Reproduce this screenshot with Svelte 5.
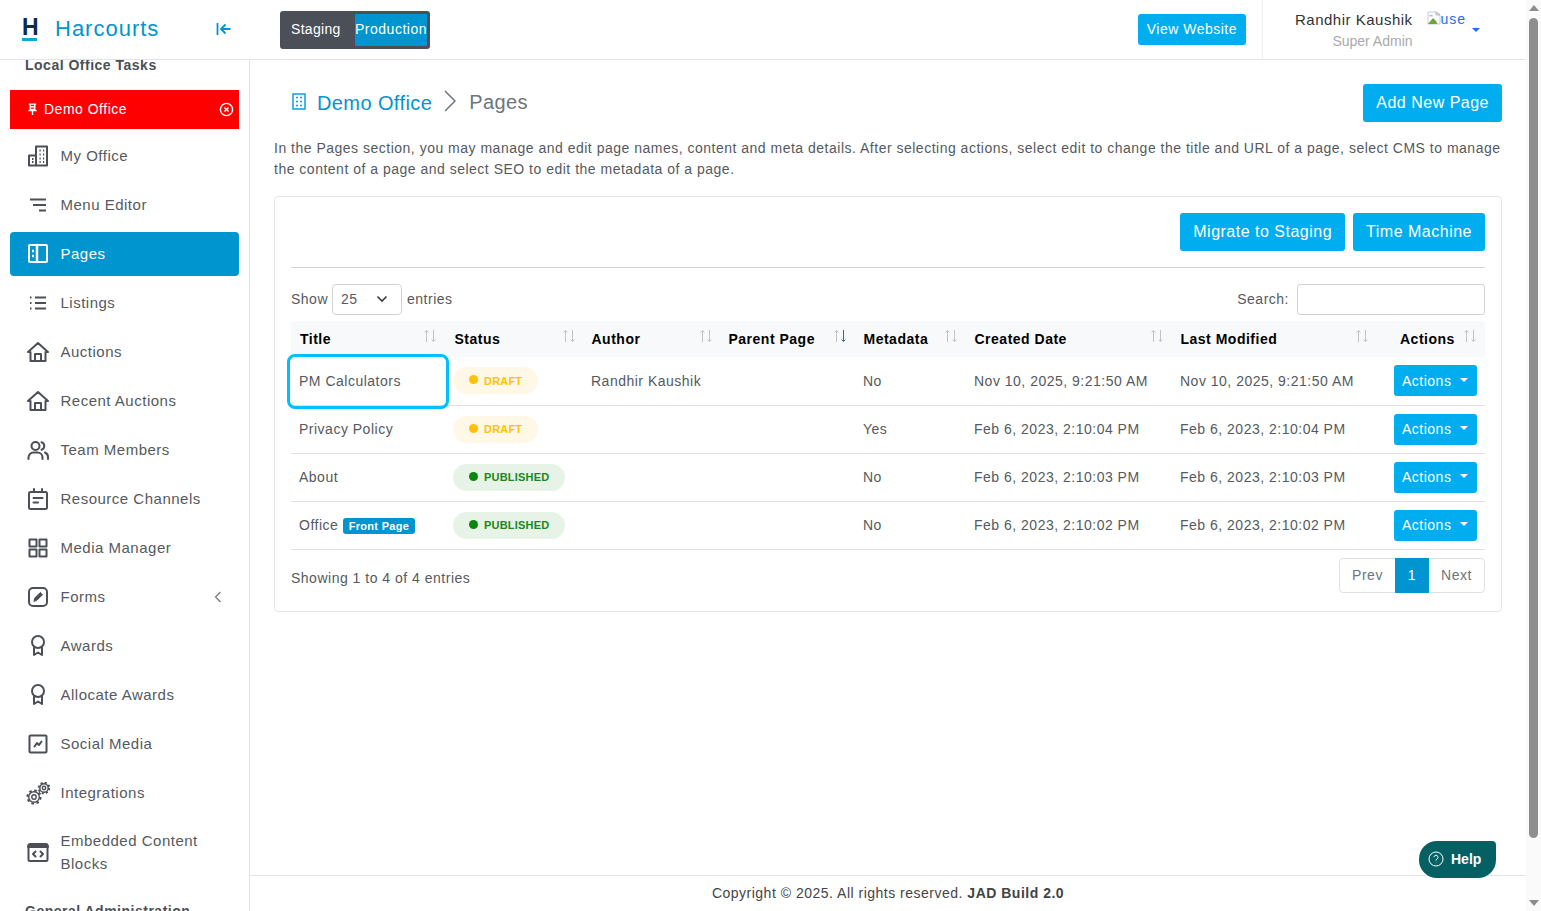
<script>
	// sidebar icons, drawn on a 24 box with a 2px-ish stroke
	const icons = {
		office: '<path d="M3 21.500V11.500h7V2.500h11v19z"/><path d="M10 11.500v10M6 15h1.500M6 18h1.500M13.500 6.500h1.200M17 6.500h1.200M13.500 10.500h1.200M17 10.500h1.200M13.500 14.500h1.200M17 14.500h1.200M13.500 18h1.200M17 18h1.200" stroke-linecap="butt"/>',
		menu: '<path d="M4 6.500h16M7 12h13M13 17.500h7" stroke-linecap="butt"/>',
		pages: '<rect x="3" y="3" width="18" height="17" rx="1"/><path d="M11 3v17" stroke-width="2.500"/><path d="M6 9h2M6 14h2" stroke-linecap="butt" stroke-width="2.400"/>',
		list: '<path d="M9 6.500h11M9 12h11M9 17.500h11M4 6.500h1.500M4 12h1.500M4 17.500h1.500" stroke-linecap="butt"/>',
		home: '<path d="M2 12 12 3l10 9h-2.500v9h-15v-9z"/><path d="M9 21v-7h6v7"/>',
		team: '<circle cx="9.500" cy="8" r="4"/><path d="M2.500 21v-1.500a5 5 0 0 1 5-5h4a5 5 0 0 1 5 5V21M15.500 4.200a4 4 0 0 1 0 7.600M19 14.500a5 5 0 0 1 3 4.500v2"/>',
		calendar: '<rect x="3" y="5" width="18" height="17" rx="1.500"/><path d="M8 2v3M16 2v3M7.500 11h9M7.500 15.500h4.500"/>',
		grid: '<rect x="3.500" y="3.500" width="7" height="7"/><rect x="13.500" y="3.500" width="7" height="7"/><rect x="3.500" y="13.500" width="7" height="7"/><rect x="13.500" y="13.500" width="7" height="7"/>',
		form: '<rect x="3" y="3" width="18" height="18" rx="4"/><path d="m8 16 .8-3 5.500-5.500 2.200 2.200-5.500 5.500z" fill="currentColor" stroke-width="1"/>',
		award: '<circle cx="12" cy="8" r="6"/><path d="M8 13.500V21l4-2.500 4 2.500v-7.500"/>',
		chart: '<rect x="3.500" y="3.500" width="17" height="17" rx="1"/><path d="m8.500 14.500 2.500-3.500 2 2 2.500-3.500"/>',
		code: '<rect x="2.500" y="4" width="19" height="17" rx="1.500"/><path d="M2.500 6.500h19" stroke-width="3"/><path d="m9.500 11.500-2.500 2.500 2.500 2.500M14.500 11.500 17 14l-2.500 2.500"/>'
	};

	const nav = [
		{ label: 'My Office', icon: 'office' },
		{ label: 'Menu Editor', icon: 'menu' },
		{ label: 'Pages', icon: 'pages', active: true },
		{ label: 'Listings', icon: 'list' },
		{ label: 'Auctions', icon: 'home' },
		{ label: 'Recent Auctions', icon: 'home' },
		{ label: 'Team Members', icon: 'team' },
		{ label: 'Resource Channels', icon: 'calendar' },
		{ label: 'Media Manager', icon: 'grid' },
		{ label: 'Forms', icon: 'form', more: true },
		{ label: 'Awards', icon: 'award' },
		{ label: 'Allocate Awards', icon: 'award' },
		{ label: 'Social Media', icon: 'chart' },
		{ label: 'Integrations', icon: 'gears' },
		{ label: 'Embedded Content Blocks', icon: 'code' }
	];

	const columns = ['Title', 'Status', 'Author', 'Parent Page', 'Metadata', 'Created Date', 'Last Modified', 'Actions'];

	const rows = [
		{ title: 'PM Calculators', status: 'DRAFT', author: 'Randhir Kaushik', meta: 'No', created: 'Nov 10, 2025, 9:21:50 AM', focus: true },
		{ title: 'Privacy Policy', status: 'DRAFT', author: '', meta: 'Yes', created: 'Feb 6, 2023, 2:10:04 PM' },
		{ title: 'About', status: 'PUBLISHED', author: '', meta: 'No', created: 'Feb 6, 2023, 2:10:03 PM' },
		{ title: 'Office', status: 'PUBLISHED', author: '', meta: 'No', created: 'Feb 6, 2023, 2:10:02 PM', front: true }
	];
</script>

<div class="page">
	<div class="window">
		<header class="topbar">
			<div class="brand">
				<span class="logo">H</span>
				<span class="brand-name">Harcourts</span>
				<svg class="collapse" viewBox="0 0 16 16"><path d="M1.500 2v12M14.500 8H5M9.500 3.500 5 8l4.500 4.500" /></svg>
			</div>
			<div class="env">
				<span class="env-item">Staging</span>
				<span class="env-item env-on">Production</span>
			</div>
			<a class="btn view-site" href="#top">View Website</a>
			<div class="user">
				<div class="user-text">
					<span class="user-name">Randhir Kaushik</span>
					<span class="user-role">Super Admin</span>
				</div>
				<span class="avatar">
					<svg class="broken" viewBox="0 0 14 14">
						<path d="M1 1h8l4 3v9H1z" fill="#fff" stroke="#b9c0c8" stroke-width=".8" />
						<path d="M9 1v3h4z" fill="#d8dde2" stroke="#9aa3ad" stroke-width=".6" />
						<path d="M1 13 6 7l3 3 1.500 3z" fill="#6da53f" />
						<path d="M2 5.500a2 2 0 0 1 4 0z" fill="#a9c7ec" />
					</svg>use
				</span>
				<span class="caret"></span>
			</div>
		</header>

		<div class="body">
			<aside class="sidebar">
				<div class="side-title">Local Office Tasks</div>
				<div class="pinned">
					<svg class="pin" viewBox="0 0 12 14"><path d="M2 1.200h8M3.500 1.200h5V7h-5zM1.500 8.200h9M6 8.200V13M3.500 4h5" /></svg>
					<span>Demo Office</span>
					<svg class="unpin" viewBox="0 0 16 16"><circle cx="8" cy="8" r="6.500" /><path d="m5.800 5.800 4.400 4.400M10.200 5.800l-4.400 4.400" /></svg>
				</div>
				<nav>
					{#each nav as item}
						<a class="nav-item" class:active={item.active} href="#top">
							{#if item.icon === 'gears'}
								<svg class="nav-icon gears" viewBox="0 0 24 24">
									<circle cx="8" cy="16" r="2.200" />
									<circle cx="8" cy="16" r="5.300" />
									<circle class="teeth" cx="8" cy="16" r="6.600" stroke-dasharray="2.590 2.590" />
									<circle cx="18" cy="7" r="1.700" />
									<circle cx="18" cy="7" r="4.200" />
									<circle class="teeth" cx="18" cy="7" r="5.300" stroke-dasharray="2.080 2.080" />
								</svg>
							{:else}
								<svg class="nav-icon" viewBox="0 0 24 24">{@html icons[item.icon]}</svg>
							{/if}
							<span class="nav-label">{item.label}</span>
							{#if item.more}
								<svg class="more" viewBox="0 0 8 12"><path d="M6.500 1 1.500 6l5 5" /></svg>
							{/if}
						</a>
					{/each}
				</nav>
				<div class="side-title side-title-next">General Administration</div>
			</aside>

			<div class="main">
				<main class="content">
					<div class="head-row">
						<div class="crumbs">
							<svg class="crumb-icon" viewBox="0 0 14 17"><rect x="1" y="1" width="12" height="15" /><path d="M4 4.500h2M8 4.500h2M4 8.500h2M8 8.500h2M4 12.500h2M8 12.500h2" /></svg>
							<span class="crumb-link">Demo Office</span>
							<svg class="crumb-sep" viewBox="0 0 12 22"><path d="m1 1 10 10L1 21" /></svg>
							<span class="crumb-now">Pages</span>
						</div>
						<a class="btn btn-lg" href="#top">Add New Page</a>
					</div>
					<p class="intro">In the Pages section, you may manage and edit page names, content and meta details. After selecting actions, select edit to change the title and URL of a page, select CMS to manage the content of a page and select SEO to edit the metadata of a page.</p>

					<section class="card">
						<div class="card-actions">
							<a class="btn btn-lg" href="#top">Migrate to Staging</a>
							<a class="btn btn-lg" href="#top">Time Machine</a>
						</div>
						<div class="table-tools">
							<label class="tool">Show
								<span class="select">25
									<svg viewBox="0 0 12 8"><path d="m1.500 1.500 4.500 4.500 4.500-4.500" /></svg>
								</span>
								entries</label>
							<label class="tool">Search:
								<span class="search"></span>
							</label>
						</div>
						<table>
							<colgroup>
								<col style="width:155px" /><col style="width:137px" /><col style="width:137px" /><col style="width:135px" />
								<col style="width:111px" /><col style="width:206px" /><col style="width:214px" /><col style="width:99px" />
							</colgroup>
							<thead>
								<tr>
									{#each columns as col}
										<th class:th-end={col === 'Actions'} class:th-mod={col === 'Last Modified'}>
											{col}
											<svg class="sort" class:sorted={col === 'Parent Page'} viewBox="0 0 14 14">
												<path class="up" d="M3.500 13V1.500M1.500 3.500l2-2 2 2" />
												<path class="down" d="M10.500 1v11.500M8.500 10.500l2 2 2-2" />
											</svg>
										</th>
									{/each}
								</tr>
							</thead>
							<tbody>
								{#each rows as row}
									<tr>
										<td class:focused={row.focus}>
											{row.title}
											{#if row.front}<span class="front">Front Page</span>{/if}
										</td>
										<td>
											<span class="pill" class:live={row.status === 'PUBLISHED'}><i></i>{row.status}</span>
										</td>
										<td>{row.author}</td>
										<td></td>
										<td>{row.meta}</td>
										<td>{row.created}</td>
										<td>{row.created}</td>
										<td class="action-cell"><a class="btn btn-actions" href="#top">Actions<span class="btn-caret"></span></a></td>
									</tr>
								{/each}
							</tbody>
						</table>
						<div class="table-foot">
							<span>Showing 1 to 4 of 4 entries</span>
							<div class="pager">
								<span class="page-link">Prev</span>
								<span class="page-link page-on">1</span>
								<span class="page-link">Next</span>
							</div>
						</div>
					</section>
				</main>
				<footer class="foot">Copyright © 2025. All rights reserved. <b>JAD Build 2.0</b></footer>
			</div>
		</div>
	</div>

	<div class="scrollbar">
		<span class="arrow arrow-up"></span>
		<span class="thumb"></span>
		<span class="arrow arrow-down"></span>
	</div>

	<button class="help">
		<svg viewBox="0 0 16 16"><circle cx="8" cy="8" r="7" /><path d="M6 6.200a2 2 0 1 1 3 1.800c-.7.400-1 .8-1 1.600M8 11.700v.3" /></svg>
		Help
	</button>
</div>

<style>
	:global(body) {
		margin: 0;
		background: #fff;
		overflow: hidden;
	}

	.page {
		position: relative;
		display: flex;
		height: 911px;
		overflow: hidden;
		font-family: 'Liberation Sans', Arial, sans-serif;
		font-size: 14px;
		letter-spacing: 0.5px;
		color: #555a60;
	}

	a {
		text-decoration: none;
	}

	.window {
		flex: 1;
		min-width: 0;
		display: flex;
		flex-direction: column;
	}

	/* top bar */
	.topbar {
		display: flex;
		align-items: center;
		height: 59px;
		flex: none;
		border-bottom: 1px solid #e4e4e4;
	}

	.brand {
		width: 280px;
		display: flex;
		align-items: center;
		padding: 0 0 2px 22px;
		box-sizing: border-box;
	}

	.logo {
		width: 15px;
		height: 20px;
		font-size: 23px;
		font-weight: 700;
		line-height: 19px;
		letter-spacing: 0;
		text-align: center;
		color: #0c2a52;
		border-bottom: 3px solid #0aa6e0;
		transform: translateY(1px);
	}

	.brand-name {
		margin-left: 18px;
		font-size: 22px;
		letter-spacing: 1px;
		color: #0095cf;
	}

	.collapse {
		width: 16px;
		height: 16px;
		margin-left: 57px;
		fill: none;
		stroke: #0095cf;
		stroke-width: 1.800;
	}

	.env {
		display: flex;
		align-items: center;
		width: 150px;
		height: 38px;
		padding: 3px;
		box-sizing: border-box;
		background: #4b5058;
		border-radius: 3px;
	}

	.env-item {
		padding: 0 0 1px 8px;
		color: #fff;
		line-height: 31px;
		letter-spacing: 0.300px;
	}

	.env-on {
		width: 72px;
		margin-left: auto;
		padding-left: 0;
		text-align: center;
		letter-spacing: 0.500px;
		white-space: nowrap;
		background: #0095cf;
	}

	.btn {
		display: inline-block;
		color: #fff;
		background: #00aeef;
		border-radius: 3px;
	}

	.view-site {
		margin-left: auto;
		padding: 0 9px;
		line-height: 31px;
	}

	.user {
		display: flex;
		align-items: flex-start;
		width: 264px;
		height: 59px;
		margin-left: 16px;
		padding: 11px 0 0 32px;
		box-sizing: border-box;
		border-left: 1px solid #eee;
	}

	.user-text {
		display: flex;
		flex-direction: column;
		align-items: flex-end;
	}

	.user-name {
		font-size: 15px;
		line-height: 18px;
		color: #333;
	}

	.user-role {
		margin-top: 4px;
		line-height: 17px;
		letter-spacing: 0;
		color: #aaa;
	}

	.avatar {
		display: flex;
		margin-left: 14px;
		letter-spacing: 1px;
		color: #1a6ef0;
		line-height: 16px;
	}

	.broken {
		width: 14px;
		height: 14px;
	}

	.caret {
		margin: 17px 0 0 6px;
		border: 4px solid transparent;
		border-top-color: #1a6ef0;
		border-bottom: 0;
	}

	/* sidebar */
	.body {
		flex: 1;
		display: flex;
		min-height: 0;
	}

	.sidebar {
		width: 250px;
		flex: none;
		box-sizing: border-box;
		padding: 0 10px;
		border-right: 1px solid #e4e4e4;
		overflow: hidden;
	}

	.side-title {
		padding: 0 15px;
		font-weight: 700;
		line-height: 10px;
		color: #4b4f56;
	}

	.pinned {
		display: flex;
		align-items: center;
		height: 39px;
		margin: 20px 0 5px;
		padding: 0 5px 1px 17px;
		box-sizing: border-box;
		color: #fff;
		background: #f00;
	}

	.pin {
		width: 11px;
		height: 13px;
		margin-right: 6px;
		fill: none;
		stroke: #fff;
		stroke-width: 1.500;
	}

	.unpin {
		width: 15px;
		height: 15px;
		margin-left: auto;
		fill: none;
		stroke: #fff;
		stroke-width: 1.500;
	}

	.nav-item {
		display: flex;
		align-items: center;
		margin-bottom: 5px;
		padding: 10px 14px 11px 16px;
		font-size: 15px;
		line-height: 23px;
		color: #555a60;
		border-radius: 4px;
	}

	.nav-item:last-child {
		margin-top: -1px;
	}

	.nav-item.active {
		color: #fff;
		background: #0095cf;
	}

	.nav-icon {
		width: 24px;
		height: 24px;
		flex: none;
		margin: -1px 10.500px -1px 0;
		fill: none;
		stroke: currentColor;
		stroke-width: 2;
		stroke-linecap: round;
		stroke-linejoin: round;
		color: #4b4f56;
	}

	.active .nav-icon {
		color: #fff;
	}

	.nav-icon.gears {
		stroke-width: 1.400;
		stroke-linecap: butt;
	}

	.nav-icon .teeth {
		stroke-width: 2;
	}

	.more {
		width: 8px;
		height: 12px;
		margin-left: auto;
		fill: none;
		stroke: #777;
		stroke-width: 1.200;
		transform: translateX(-3px);
	}

	.side-title-next {
		margin-top: 19px;
		line-height: 12px;
	}

	/* main */
	.main {
		flex: 1;
		min-width: 0;
		display: flex;
		flex-direction: column;
	}

	.content {
		flex: 1;
		padding: 24px 24px 0;
	}

	.head-row {
		display: flex;
		justify-content: space-between;
		align-items: center;
		height: 38px;
	}

	.crumbs {
		display: flex;
		align-items: center;
		padding-left: 18px;
	}

	.crumb-icon {
		width: 14px;
		height: 17px;
		margin-right: 11px;
		transform: translateY(-2px);
		fill: none;
		stroke: #0aa0dc;
		stroke-width: 1.500;
	}

	.crumb-link {
		font-size: 20px;
		letter-spacing: 0.400px;
		color: #0095cf;
	}

	.crumb-sep {
		width: 12px;
		height: 22px;
		margin: 0 13px 0 12px;
		transform: translateY(-2px);
		fill: none;
		stroke: #6c757d;
		stroke-width: 1.500;
	}

	.crumb-now {
		font-size: 20px;
		letter-spacing: 0.400px;
		color: #6c757d;
		transform: translateY(-1px);
	}

	.btn-lg {
		padding: 0 13px;
		font-size: 16px;
		line-height: 38px;
	}

	.intro {
		margin: 16px 0 0;
		font-size: 14px;
		line-height: 21px;
		color: #555a60;
	}

	.card {
		margin-top: 16px;
		padding: 16px 16px 18px;
		border: 1px solid #e4e4e4;
		border-radius: 4px;
	}

	.card-actions {
		display: flex;
		justify-content: flex-end;
		gap: 8px;
		padding-bottom: 16px;
		border-bottom: 1px solid #d4d4d4;
	}

	.table-tools {
		display: flex;
		justify-content: space-between;
		margin-top: 16px;
	}

	.tool {
		display: flex;
		align-items: flex-start;
		height: 31px;
		line-height: 30px;
	}

	.select {
		display: flex;
		align-items: center;
		justify-content: space-between;
		width: 70px;
		height: 31px;
		margin: 0 5px 0 4px;
		padding: 0 13px 1px 8px;
		box-sizing: border-box;
		border: 1px solid #ced4da;
		border-radius: 4px;
	}

	.select svg {
		width: 12px;
		height: 8px;
		fill: none;
		stroke: #343a40;
		stroke-width: 1.600;
	}

	.search {
		width: 188px;
		height: 31px;
		margin-left: 8px;
		box-sizing: border-box;
		border: 1px solid #ced4da;
		border-radius: 3px;
	}

	table {
		width: 100%;
		margin-top: 6px;
		table-layout: fixed;
		border-collapse: collapse;
	}

	thead tr {
		background: #f8f9fa;
	}

	th {
		position: relative;
		height: 36px;
		padding: 0 8px 0 8.500px;
		box-sizing: border-box;
		font-weight: 700;
		text-align: left;
		color: #000;
		white-space: nowrap;
	}

	th:first-child {
		padding-left: 9px;
	}

	th.th-end {
		padding-left: 14px;
	}

	.sort {
		position: absolute;
		top: 8px;
		right: 8px;
		width: 14px;
		height: 14px;
		fill: none;
		stroke: #bfc3c7;
		stroke-width: 1;
	}

	th:first-child .sort {
		right: 9px;
	}

	th:nth-child(2) .sort,
	th:nth-child(3) .sort {
		right: 7px;
	}

	.th-mod .sort {
		right: 17px;
	}

	.sort.sorted .down {
		stroke: #2b6f9e;
	}

	td {
		position: relative;
		height: 48px;
		padding: 0 8px;
		box-sizing: border-box;
		border-bottom: 1px solid #dee2e6;
		white-space: nowrap;
	}

	td.focused::after {
		content: '';
		position: absolute;
		inset: -3px -3px -4px -4px;
		border: 3px solid #00bfff;
		border-radius: 8px;
	}

	.front {
		padding: 2px 6px;
		font-size: 11px;
		font-weight: 700;
		letter-spacing: 0.300px;
		color: #fff;
		background: #0095cf;
		border-radius: 3px;
	}

	.pill {
		display: inline-flex;
		align-items: center;
		height: 27px;
		margin-left: -1px;
		padding: 0 16px;
		font-size: 11px;
		font-weight: 700;
		letter-spacing: 0.200px;
		color: #ffc107;
		background: #fff8e6;
		border-radius: 14px;
	}

	.pill i {
		width: 9px;
		height: 9px;
		margin: -2px 6px 0 0;
		background: #ffc107;
		border-radius: 50%;
	}

	.pill.live {
		color: #198a19;
		background: #e6f3e6;
	}

	.pill.live i {
		background: #0c860c;
	}

	.action-cell {
		text-align: right;
	}

	.btn-actions {
		display: inline-flex;
		align-items: center;
		height: 31px;
		padding: 0 9px 0 8px;
	}

	.btn-caret {
		margin: -2px 0 0 9px;
		border: 4px solid transparent;
		border-top-color: #fff;
		border-bottom: 0;
	}

	.table-foot {
		display: flex;
		justify-content: space-between;
		align-items: flex-start;
		margin-top: 8px;
	}

	.table-foot > span {
		margin-top: 12px;
	}

	.pager {
		display: flex;
		height: 35px;
		box-sizing: border-box;
		border: 1px solid #dee2e6;
		border-radius: 4px;
	}

	.page-link {
		width: 55px;
		line-height: 33px;
		text-align: center;
		color: #6c757d;
	}

	.page-on {
		width: 34px;
		margin: -1px 0;
		line-height: 35px;
		color: #fff;
		background: #0095cf;
	}

	.foot {
		height: 36px;
		flex: none;
		box-sizing: border-box;
		padding-top: 9px;
		border-top: 1px solid #e4e4e4;
		text-align: center;
		line-height: 17px;
		color: #444;
	}

	/* page scrollbar */
	.scrollbar {
		width: 15px;
		flex: none;
		display: flex;
		flex-direction: column;
		align-items: center;
		background: #fafafa;
	}

	.arrow {
		border: 5px solid transparent;
		border-top: 0;
		border-bottom: 6px solid #8c8c8c;
		margin-top: 5px;
	}

	.arrow-down {
		margin: 0;
		border-top: 6px solid #8c8c8c;
		border-bottom: 0;
	}

	.thumb {
		width: 9px;
		height: 820px;
		margin: 7px 0 62px;
		background: #8f8f8f;
		border-radius: 5px;
	}

	.help {
		position: absolute;
		left: 1419px;
		top: 841px;
		display: flex;
		align-items: center;
		gap: 7px;
		width: 77px;
		height: 37px;
		padding: 0 0 1px 9px;
		border: 0;
		font-family: inherit;
		font-size: 14px;
		font-weight: 700;
		letter-spacing: 0;
		color: #fff;
		background: #056064;
		border-radius: 18px 4px 18px 18px;
	}

	.help svg {
		width: 16px;
		height: 16px;
		fill: none;
		stroke: #fff;
		stroke-width: 1;
	}
</style>
